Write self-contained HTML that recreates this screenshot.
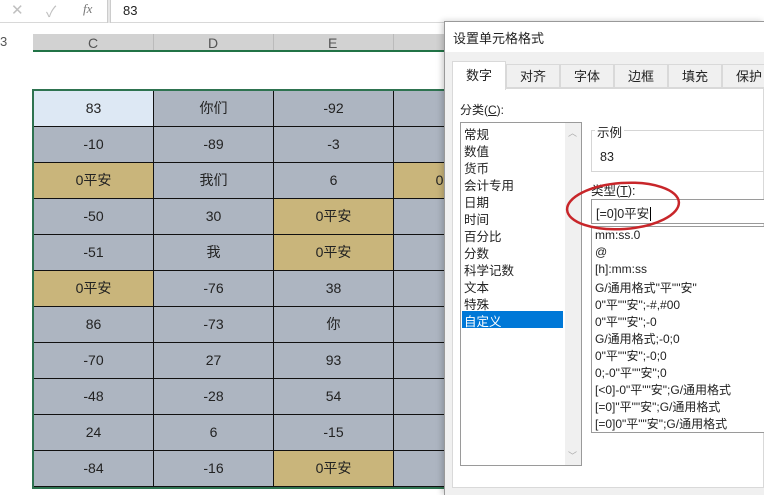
<!DOCTYPE html>
<html><head><meta charset="utf-8"><style>
*{margin:0;padding:0;box-sizing:border-box}
body{width:764px;height:495px;position:relative;overflow:hidden;background:#fff;font-family:"Liberation Sans","Noto Sans CJK SC",sans-serif;color:#222}
.a{position:absolute}
.cell{position:absolute;width:120px;height:36px;border-right:1px solid #111;border-bottom:1px solid #111;text-align:center;line-height:35px;font-size:14px;color:#222}
.g{background:#adb5c1}.t{background:#c9b57b}.s{background:#dde8f4}
.li{position:absolute;font-size:12px;color:#222;white-space:nowrap}
</style></head><body>
<!-- formula bar -->
<div class="a" style="left:0;top:0;width:764px;height:23px;background:#fff;border-bottom:1px solid #d8d8d8"></div>
<div class="a" style="left:107px;top:0;width:4px;height:23px;background:#e6e6e6;border-left:1px solid #ccc;border-right:1px solid #ccc"></div>
<div class="a" style="left:11px;top:1px;font-size:15px;color:#c0c0c0">✕</div>
<div class="a" style="left:46px;top:1px;font-size:15px;color:#c0c0c0">✓</div>
<div class="a" style="left:83px;top:1px;font-size:13px;color:#777;font-style:italic;font-family:'Liberation Serif',serif">fx</div>
<div class="a" style="left:123px;top:3px;font-size:13px">83</div>
<!-- column headers -->
<div class="a" style="left:0;top:34px;width:33px;height:18px;background:#fff"></div>
<div class="a" style="left:0;top:34px;font-size:13px;color:#555">3</div>
<div class="a" style="left:33px;top:34px;width:420px;height:18px;background:#d2d2d2;border-bottom:2px solid #217346"></div>
<div class="a" style="left:153px;top:34px;width:1px;height:16px;background:#bbb"></div>
<div class="a" style="left:273px;top:34px;width:1px;height:16px;background:#bbb"></div>
<div class="a" style="left:393px;top:34px;width:1px;height:16px;background:#bbb"></div>
<div class="a" style="left:88px;top:35px;font-size:14px;color:#555">C</div>
<div class="a" style="left:208px;top:35px;font-size:14px;color:#555">D</div>
<div class="a" style="left:328px;top:35px;font-size:14px;color:#555">E</div>
<!-- table -->
<div class="a" style="left:32px;top:89px;width:420px;height:400px;border:2px solid #2e7350;border-right:none"></div>
<div id="tb"></div>
<script>
var d=[["83","你们","-92",""],["-10","-89","-3",""],["0平安","我们","6","0平安"],["-50","30","0平安",""],["-51","我","0平安",""],["0平安","-76","38",""],["86","-73","你",""],["-70","27","93",""],["-48","-28","54",""],["24","6","-15",""],["-84","-16","0平安",""]];
var h="";
for(var r=0;r<11;r++)for(var c=0;c<4;c++){var v=d[r][c];var cl=(r==0&&c==0)?"s":(v.indexOf("平安")>=0?"t":"g");
h+='<div class="cell '+cl+'" style="left:'+(34+c*120)+'px;top:'+(91+r*36)+'px">'+v+'</div>';}
document.getElementById("tb").innerHTML=h;
</script>
<!-- dialog -->
<div class="a" style="left:444px;top:21px;width:320px;height:474px;background:#f0f0f0;border-left:1px solid #999;border-top:1px solid #999;box-shadow:-2px 0 6px rgba(0,0,0,.2)"></div>
<div class="a" style="left:445px;top:22px;width:319px;height:30px;background:#fff"></div>
<div class="a" style="left:453px;top:28px;font-size:13px">设置单元格格式</div>
<!-- tabs -->
<div class="a" style="left:452px;top:88px;width:312px;height:400px;background:#fff;border:1px solid #d9d9d9"></div>
<div class="a" style="left:452px;top:61px;width:54px;height:29px;background:#fff;border:1px solid #d9d9d9;border-bottom:none;font-size:13px;text-align:center;line-height:28px">数字</div>
<div class="a" style="left:506px;top:64px;width:54px;height:24px;background:#f0f0f0;border:1px solid #d9d9d9;font-size:13px;text-align:center;line-height:23px">对齐</div>
<div class="a" style="left:560px;top:64px;width:54px;height:24px;background:#f0f0f0;border:1px solid #d9d9d9;font-size:13px;text-align:center;line-height:23px">字体</div>
<div class="a" style="left:614px;top:64px;width:54px;height:24px;background:#f0f0f0;border:1px solid #d9d9d9;font-size:13px;text-align:center;line-height:23px">边框</div>
<div class="a" style="left:668px;top:64px;width:54px;height:24px;background:#f0f0f0;border:1px solid #d9d9d9;font-size:13px;text-align:center;line-height:23px">填充</div>
<div class="a" style="left:722px;top:64px;width:54px;height:24px;background:#f0f0f0;border:1px solid #d9d9d9;font-size:13px;text-align:center;line-height:23px">保护</div>
<div class="a" style="left:460px;top:101px;font-size:12px">分类(<u>C</u>):</div>
<!-- category list -->
<div class="a" style="left:460px;top:122px;width:122px;height:344px;border:1px solid #9a9a9a;background:#fff"></div>
<div class="a" style="left:565px;top:123px;width:16px;height:342px;background:#f0f0f0"></div>
<div class="a" style="left:568px;top:126px;font-size:9px;color:#aaa">︿</div>
<div class="a" style="left:568px;top:449px;font-size:9px;color:#aaa">﹀</div>
<div class="a" style="left:462px;top:311px;width:101px;height:17px;background:#0078d7"></div>
<div id="cat"></div>
<script>
var c=["常规","数值","货币","会计专用","日期","时间","百分比","分数","科学记数","文本","特殊","自定义"],h="";
for(var i=0;i<c.length;i++)h+='<div class="li" style="left:464px;top:'+(124+i*17)+'px;font-size:12.5px;'+(i==11?'color:#fff':'')+'">'+c[i]+'</div>';
document.getElementById("cat").innerHTML=h;
</script>
<!-- sample -->
<div class="a" style="left:591px;top:130px;width:180px;height:42px;border:1px solid #d5d5d5"></div>
<div class="a" style="left:595px;top:122px;background:#fff;padding:0 2px;font-size:12.5px">示例</div>
<div class="a" style="left:600px;top:150px;font-size:12.5px">83</div>
<div class="a" style="left:591px;top:180px;font-size:12.5px">类型(<u>T</u>):</div>
<div class="a" style="left:591px;top:199px;width:180px;height:25px;border:1px solid #9a9a9a;background:#fff"></div>
<div class="a" style="left:596px;top:203px;font-size:12.5px">[=0]0平安<span style="border-left:1px solid #000;margin-left:1px"></span></div>
<div class="a" style="left:591px;top:226px;width:180px;height:207px;border:1px solid #9a9a9a;background:#fff;overflow:hidden"></div>
<div id="fm"></div>
<script>
var f=["mm:ss.0","@","[h]:mm:ss","G/通用格式\"平\"\"安\"","0\"平\"\"安\";-#,#00","0\"平\"\"安\";-0","G/通用格式;-0;0","0\"平\"\"安\";-0;0","0;-0\"平\"\"安\";0","[<0]-0\"平\"\"安\";G/通用格式","[=0]\"平\"\"安\";G/通用格式","[=0]0\"平\"\"安\";G/通用格式"],h="";
for(var i=0;i<f.length;i++)h+='<div class="li" style="left:595px;top:'+(228+i*17)+'px">'+f[i].replace(/</g,"&lt;")+'</div>';
document.getElementById("fm").innerHTML=h;
</script>
<svg class="a" style="left:560px;top:176px" width="130" height="60"><ellipse cx="63" cy="30" rx="56" ry="23" fill="none" stroke="#c8262a" stroke-width="2.5" transform="rotate(-4 63 30)"/></svg>
</body></html>
